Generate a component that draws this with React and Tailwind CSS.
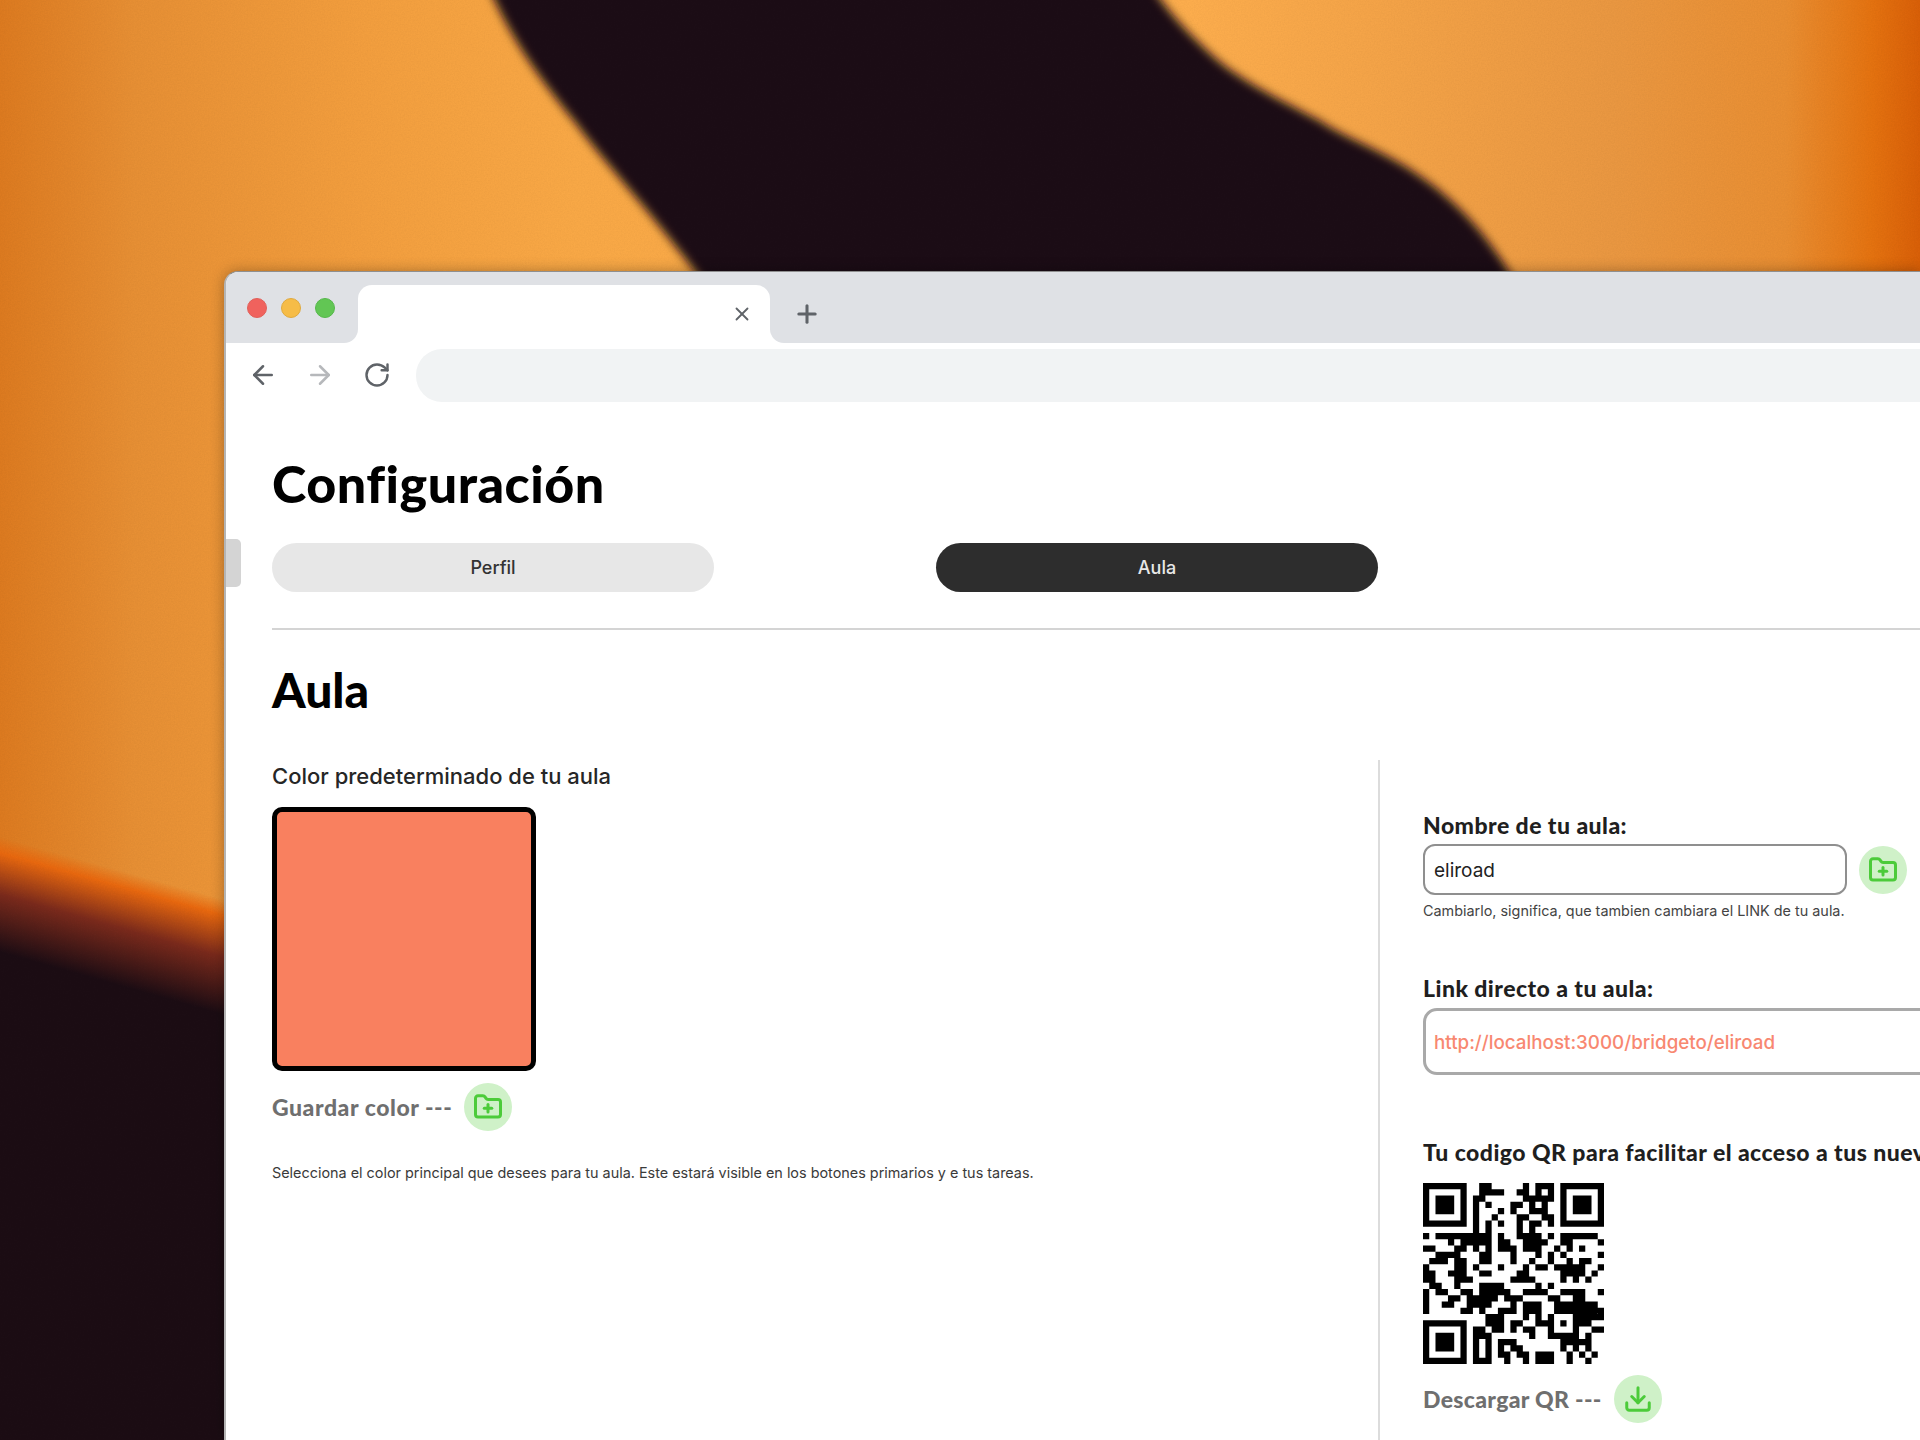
import React from 'react';
import { ArrowLeft, ArrowRight, Download, FolderPlus, Plus, RotateCw, X } from 'lucide-react';

// module rows of the QR code, transcribed from the screenshot
const QR_ROWS = [
  'XXXXXXX..XX.....X.XXX.XXXXXXX',
  'X.....X..XXXX..XX.X.X.X.....X',
  'X.XXX.X.XX......XXXXX.X.XXX.X',
  'X.XXX.X.X.X...XX.X.X..X.XXX.X',
  'X.XXX.X.X...X.X..XXX..X.XXX.X',
  'X.....X.X..X...XX..XX.X.....X',
  'XXXXXXX.X.X.X..X.XX.X.XXXXXXX',
  '........X.X....X.X...........',
  'X.XXXXXXXXX.X..XXXX.X.XXXXXX.',
  '....X.XXXXX.XX..XXXX..XX....X',
  'XX...XX.X.X.XXX.XXX..X.X.X...',
  '..XXXX...XX...X...X.X.X.....X',
  '.XXX.XX..XX...X..X..X..X.XX..',
  'X....XX.X...X...X.XX.XXXXX..X',
  'XX..XXX..XX....XX.....XXXX.X.',
  'XX...XXX......XXXX....X.X.X..',
  '.XX..X...XXXX.....X.X........',
  'X.XX..XX.XXXXX..XXXX..XXXX..X',
  'X...XX.XXXXX.XXX....XX..XX...',
  'X..XX..XXXX...X.XXX..XXXXXXX.',
  'X.....XX.X..XXX.XXX..XXXXXXXX',
  '..........XXX...X.X.X...XXXXX',
  'XXXXXXX...XXX.XX..XXX.X.XXX..',
  'X.....X.XX.XX.X.XX..X...X..XX',
  'X.XXX.X.XXX......X..XXXXX.X..',
  'X.XXX.X.X.X.XXX.......XXXXX..',
  'X.XXX.X.X.X.X.XX......X.X.X..',
  'X.....X.X.X.XX.XX.XXX..X.X.X.',
  'XXXXXXX.XXX..X..X.XXX..X..X..',
];

function QrCode() {
  // one path, so neighbouring modules show no seams
  const d = QR_ROWS.map((row, y) =>
    row.split('').map((c, x) => (c === 'X' ? `M${x} ${y}h1v1h-1z` : '')).join('')
  ).join('');
  return (
    <svg width="181" height="181" viewBox="0 0 29 29" className="block">
      <path d={d} fill="#000" />
    </svg>
  );
}

function Wallpaper() {
  return (
    <svg className="absolute inset-0" width="1920" height="1440" viewBox="0 0 1920 1440">
      <defs>
        <linearGradient id="wall" x1="0" y1="0" x2="1920" y2="0" gradientUnits="userSpaceOnUse">
          <stop offset="0" stopColor="#dc7a20" />
          <stop offset="0.07" stopColor="#e68f34" />
          <stop offset="0.19" stopColor="#f29e3e" />
          <stop offset="0.3" stopColor="#f8a846" />
          <stop offset="0.62" stopColor="#fcad4d" />
          <stop offset="0.84" stopColor="#e99741" />
          <stop offset="0.93" stopColor="#e88e32" />
          <stop offset="0.975" stopColor="#e47210" />
          <stop offset="1" stopColor="#d85f08" />
        </linearGradient>
        <linearGradient id="dusk" x1="112" y1="868" x2="82" y2="975" gradientUnits="userSpaceOnUse">
          <stop offset="0" stopColor="#e8680f" stopOpacity="0" />
          <stop offset="0.14" stopColor="#e8680f" />
          <stop offset="0.5" stopColor="#7a2a1c" />
          <stop offset="1" stopColor="#1c0d14" />
        </linearGradient>
        <filter id="soft" x="-10%" y="-10%" width="120%" height="120%">
          <feGaussianBlur stdDeviation="5" />
        </filter>
        <filter id="grain">
          <feTurbulence type="fractalNoise" baseFrequency="0.7" numOctaves="2" />
          <feColorMatrix values="0 0 0 0 0  0 0 0 0 0  0 0 0 0 0  0 0 0 1.2 -0.35" />
        </filter>
      </defs>
      <rect width="1920" height="1440" fill="url(#wall)" />
      <rect y="780" width="240" height="660" fill="url(#dusk)" />
      <path
        d="M486 -20 C510 40 545 85 575 122 C610 170 655 215 716 300 L1525 300 C1488 230 1450 195 1408 168 C1370 145 1340 135 1322 122 C1280 100 1240 80 1215 58 C1190 35 1165 10 1148 -20 Z"
        fill="#1c0d14"
        filter="url(#soft)"
      />
      <rect width="1920" height="1440" filter="url(#grain)" opacity="0.04" />
    </svg>
  );
}

function IconButton({ icon: Icon, size = 30 }) {
  return (
    <span className="flex h-[48px] w-[48px] shrink-0 items-center justify-center rounded-full bg-[#cff1c8] text-[#4ccb3a]">
      <Icon size={size} strokeWidth={2.4} />
    </span>
  );
}

export default function App() {
  const heading = { fontFamily: 'Lato, sans-serif' };
  return (
    <div className="relative h-[1440px] w-[1920px] overflow-hidden font-['Inter',sans-serif]">
      <Wallpaper />
      <div className="relative pl-[224px] pt-[271px]">
        <div className="relative h-[1169px] w-[1696px] overflow-hidden rounded-tl-[14px] border-l-2 border-t border-l-[#b4b4b4] border-t-[#8f8f8f] bg-white shadow-[0_0_14px_rgba(0,0,0,0.3)]">
          {/* tab strip */}
          <div className="flex h-[71px] items-end bg-[#dfe1e5]">
            <div className="flex h-[71px] w-[118px] items-center gap-[14px] self-start pl-[21px]">
              <span className="h-[20px] w-[20px] rounded-full border border-[#e0605a] bg-[#f0625d]" />
              <span className="h-[20px] w-[20px] rounded-full border border-[#e0aa3e] bg-[#f6bc47]" />
              <span className="h-[20px] w-[20px] rounded-full border border-[#55b84a] bg-[#62c654]" />
            </div>
            <div className="h-[14px] w-[14px] bg-white">
              <div className="h-full w-full rounded-br-[14px] bg-[#dfe1e5]" />
            </div>
            <div className="flex h-[58px] w-[412px] items-center justify-end rounded-t-[14px] bg-white pr-[17px] text-[#5f6368]">
              <X size={22} strokeWidth={2} />
            </div>
            <div className="h-[14px] w-[14px] bg-white">
              <div className="h-full w-full rounded-bl-[14px] bg-[#dfe1e5]" />
            </div>
            <div className="flex h-[58px] items-center pl-[9px] text-[#5f6368]">
              <Plus size={28} strokeWidth={2.6} />
            </div>
          </div>
          {/* toolbar */}
          <div className="flex h-[66px] items-center pb-[2px] pl-[22px]">
            <ArrowLeft size={30} strokeWidth={2} className="text-[#5f6368]" />
            <ArrowRight size={30} strokeWidth={2} className="ml-[27px] text-[#b6b8bb]" />
            <RotateCw size={28} strokeWidth={2.1} className="ml-[28px] text-[#5f6368]" />
            <div className="ml-[25px] h-[53px] flex-1 rounded-l-[26px] bg-[#f1f3f4]" />
          </div>
          <div className="absolute left-0 top-[267px] h-[48px] w-[15px] rounded-r-[5px] bg-[#d4d4d4]" />
          {/* page */}
          <div className="pl-[46px]">
            <h1 style={heading} className="mt-[45px] text-[52px] font-black leading-[58px] tracking-[0.5px] text-black">Configuración</h1>
            <div className="mt-[31px] flex h-[49px] text-[18px] font-medium">
              <div className="flex w-[442px] items-center justify-center rounded-full bg-[#e7e7e7] text-[#333]">Perfil</div>
              <div className="ml-[222px] flex w-[442px] items-center justify-center rounded-full bg-[#2d2d2d] text-[#e8e8e8]">Aula</div>
            </div>
            <div className="mt-[36px] h-[2px] bg-[#d4d4d4]" />
            <h2 style={heading} className="mt-[32px] text-[48px] font-black leading-[56px] text-black">Aula</h2>
            <div className="mt-[42px] flex">
              <div className="w-[1106px] shrink-0">
                <div className="mt-[1px] text-[22px] font-medium leading-[30px] text-[#262626]">Color predeterminado de tu aula</div>
                <div className="mt-[16px] h-[264px] w-[264px] rounded-[10px] border-[5px] border-black bg-[#f9805f]" />
                <div className="mt-[12px] flex items-center gap-[12px]">
                  <span style={heading} className="text-[23px] font-black leading-[48px] tracking-[0.55px] text-[#6f6f6f]">Guardar color ---</span>
                  <IconButton icon={FolderPlus} />
                </div>
                <p className="mt-[32px] text-[14.4px] leading-[20px] text-[#3a3a3a]">
                  Selecciona el color principal que desees para tu aula. Este estará visible en los botones primarios y e tus tareas.
                </p>
              </div>
              <div className="min-h-[700px] min-w-0 flex-1 border-l-2 border-[#dcdcdc] pl-[43px] pt-[51px]">
                <div style={heading} className="text-[23px] font-black leading-[28px] tracking-[0.45px] text-[#1f1f1f]">Nombre de tu aula:</div>
                <div className="mt-[5px] flex items-center gap-[12px]">
                  <div className="flex h-[51px] w-[424px] items-center rounded-[12px] border-2 border-[#8f8f8f] px-[9px] pt-[3px] text-[19px] text-[#222]">eliroad</div>
                  <IconButton icon={FolderPlus} />
                </div>
                <p className="mt-[6px] whitespace-nowrap text-[14.4px] leading-[20px] text-[#444]">Cambiarlo, significa, que tambien cambiara el LINK de tu aula.</p>
                <div style={heading} className="mt-[53px] text-[23px] font-black leading-[28px] tracking-[0.45px] text-[#1f1f1f]">Link directo a tu aula:</div>
                <div className="mt-[6px] flex h-[67px] w-[600px] items-center rounded-[14px] border-[3px] border-[#a9a9a9] px-[8px] pt-[4px] text-[18.8px] font-medium text-[#f88871]">
                  http://localhost:3000/bridgeto/eliroad
                </div>
                <div style={heading} className="mt-[63px] whitespace-nowrap text-[23px] font-black leading-[28px] tracking-[0.45px] text-[#1f1f1f]">
                  Tu codigo QR para facilitar el acceso a tus nuevos estudiantes:
                </div>
                <div className="mt-[17px]"><QrCode /></div>
                <div className="mt-[11px] flex items-center gap-[12px]">
                  <span style={heading} className="text-[23px] font-black leading-[48px] tracking-[0.3px] text-[#6f6f6f]">Descargar QR ---</span>
                  <IconButton icon={Download} />
                </div>
              </div>
            </div>
          </div>
        </div>
      </div>
    </div>
  );
}
